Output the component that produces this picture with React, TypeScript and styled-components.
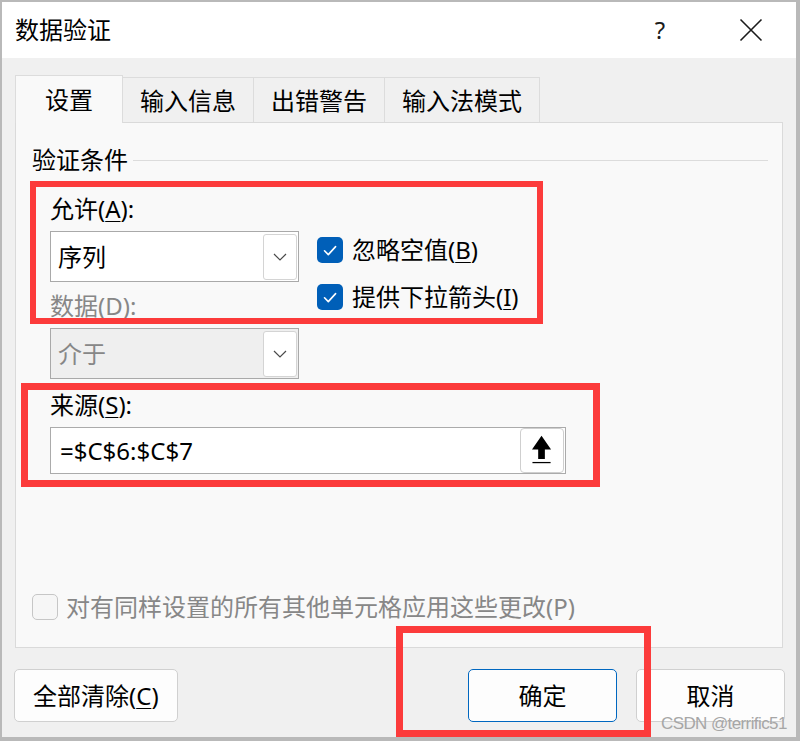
import React from "react";
import styled, { createGlobalStyle } from "styled-components";

const Global = createGlobalStyle`
  html, body { margin: 0; padding: 0; background: #b9b9b9; }
  body { font-family: "Noto Sans", "Noto Sans CJK SC", sans-serif; }
  * { box-sizing: border-box; }
`;

const Dialog = styled.div`
  position: relative;
  width: 794px;
  height: 735px;
  margin: 2px 0 0 2px;
  background: #f0f0f0;
  display: flex;
  flex-direction: column;
  font-size: 24px;
  color: #000;
  overflow: hidden;
`;

const TitleBar = styled.div`
  height: 56px;
  background: #fff;
  display: flex;
  align-items: center;
  padding: 0 10px 0 13px;
`;

const Title = styled.div`
  flex: 1;
  line-height: 28px;
`;

const TitleButton = styled.div<{ $gap?: number }>`
  width: 70px;
  height: 56px;
  display: flex;
  align-items: center;
  justify-content: center;
  margin-right: ${(p) => p.$gap ?? 0}px;
  color: #1b1b1b;
  line-height: 28px;
`;

const Body = styled.div`
  flex: 1;
  display: flex;
  flex-direction: column;
  padding: 17px 13px 0 13px;
`;

const TabRow = styled.div`
  display: flex;
  align-items: flex-end;
  position: relative;
  z-index: 1;
`;

const Tab = styled.div<{ $active?: boolean; $first?: boolean }>`
  min-width: 108px;
  padding: 0 17px;
  height: ${(p) => (p.$active ? 48 : 45)}px;
  margin-bottom: ${(p) => (p.$active ? -1 : 0)}px;
  display: flex;
  align-items: center;
  justify-content: center;
  padding-top: ${(p) => (p.$active ? 0 : 2)}px;
  background: ${(p) => (p.$active ? "#f9f9f9" : "#f0f0f0")};
  border-top: 1px solid #dcdcdc;
  border-right: 1px solid #dcdcdc;
  border-left: ${(p) => (p.$first ? "1px solid #dcdcdc" : "none")};
  line-height: 28px;
`;

const Panel = styled.div`
  height: 526px;
  border: 1px solid #dadada;
  background: #f9f9f9;
  display: flex;
  flex-direction: column;
  padding: 23px 14px 27px 16px;
`;

const SectionHeader = styled.div`
  display: flex;
  align-items: center;
  gap: 5px;
  line-height: 28px;
`;

const Rule = styled.div`
  flex: 1;
  height: 1px;
  background: #dcdcdc;
`;

const Form = styled.div`
  margin: 21px 0 0 18px;
  display: flex;
  flex-direction: column;
  gap: 12px;
`;

const Row = styled.div`
  display: flex;
  align-items: flex-start;
  gap: 18px;
`;

const LeftCol = styled.div`
  width: 249px;
  display: flex;
  flex-direction: column;
  gap: 10px;
`;

const Field = styled.div`
  display: flex;
  flex-direction: column;
  gap: 8px;
`;

const Label = styled.div<{ $disabled?: boolean }>`
  height: 28px;
  line-height: 28px;
  color: ${(p) => (p.$disabled ? "#878787" : "#000")};
  white-space: nowrap;
  u { text-underline-offset: 3px; text-decoration-thickness: 1px; }
`;

const Combo = styled.div<{ $disabled?: boolean }>`
  height: 51px;
  display: flex;
  align-items: center;
  justify-content: space-between;
  border: 1px solid #a9a9a9;
  background: ${(p) => (p.$disabled ? "#efefef" : "#fff")};
  color: ${(p) => (p.$disabled ? "#878787" : "#000")};
  padding: 0 1px 0 7px;
  line-height: 28px;
`;

const ComboButton = styled.div`
  width: 34px;
  height: 46px;
  border: 1px solid #d4d4d4;
  border-radius: 3px;
  background: #fff;
  display: flex;
  align-items: center;
  justify-content: center;
`;

const RightCol = styled.div`
  padding-top: 42px;
  display: flex;
  flex-direction: column;
  gap: 21px;
`;

const CheckRow = styled.div<{ $disabled?: boolean }>`
  height: 26px;
  display: flex;
  align-items: center;
  gap: 9px;
  line-height: 28px;
  white-space: nowrap;
  color: ${(p) => (p.$disabled ? "#878787" : "#000")};
  u { text-underline-offset: 3px; text-decoration-thickness: 1px; }
`;

const CheckText = styled.span`
  display: inline-block;
`;

const CheckBox = styled.div<{ $checked?: boolean }>`
  width: 26px;
  height: 26px;
  flex: none;
  border-radius: 5px;
  background: ${(p) => (p.$checked ? "#005fb8" : "#f6f6f6")};
  border: ${(p) => (p.$checked ? "none" : "1.5px solid #c6c6c6")};
  display: flex;
  align-items: center;
  justify-content: center;
`;

const SourceInput = styled.div`
  width: 516px;
  height: 47px;
  border: 1px solid #ababab;
  background: #fff;
  display: flex;
  align-items: center;
  justify-content: space-between;
  padding: 0 1px 0 9px;
  line-height: 28px;
`;

const UploadButton = styled.div`
  width: 44px;
  height: 45px;
  border: 1px solid #cfcfcf;
  border-radius: 4px;
  background: #fff;
  display: flex;
  align-items: center;
  justify-content: center;
`;

const BottomCheck = styled(CheckRow)`
  margin-top: auto;
  gap: 8px;
`;

const ButtonRow = styled.div`
  margin: 21px -2px 0 -1px;
  display: flex;
  gap: 19px;
`;

const Button = styled.div<{ $primary?: boolean; $push?: boolean }>`
  min-width: 149px;
  height: 53px;
  padding: 0 18px;
  display: flex;
  align-items: center;
  justify-content: center;
  background: #fdfdfd;
  border: 1px solid ${(p) => (p.$primary ? "#0067c0" : "#d0d0d0")};
  border-radius: 5px;
  margin-left: ${(p) => (p.$push ? "auto" : "0")};
  line-height: 28px;
  white-space: nowrap;
  u { text-underline-offset: 3px; text-decoration-thickness: 1px; }
`;

const RedBox = styled.div<{ $x: number; $y: number; $w: number; $h: number; $t: number }>`
  position: absolute;
  left: ${(p) => p.$x}px;
  top: ${(p) => p.$y}px;
  width: ${(p) => p.$w}px;
  height: ${(p) => p.$h}px;
  border: ${(p) => p.$t}px solid #fc3b3b;
  pointer-events: none;
  z-index: 5;
`;

const Watermark = styled.div`
  position: absolute;
  left: 659px;
  top: 712px;
  font-family: "Liberation Sans", Arial, sans-serif;
  font-size: 17px;
  line-height: 19px;
  letter-spacing: -0.6px;
  color: #a6a6a6;
  z-index: 6;
  white-space: nowrap;
`;

const Chevron = () => (
  <svg width="14" height="8" viewBox="0 0 14 8">
    <path d="M1 1 L7 7 L13 1" fill="none" stroke="#4a4a4a" strokeWidth="1.2" />
  </svg>
);

const Check = () => (
  <svg width="26" height="26" viewBox="0 0 26 26">
    <path d="M7.5 13.8 L11.3 17.6 L18.6 9.6" fill="none" stroke="#fff" strokeWidth="1.6" strokeLinecap="round" strokeLinejoin="round" />
  </svg>
);

const UpArrow = () => (
  <svg width="44" height="45" viewBox="0 0 44 45">
    <polygon points="21.5,7 31.5,21.5 25,21.5 25,31.5 18,31.5 18,21.5 11.5,21.5" fill="#000" />
    <rect x="12" y="34.5" width="19" height="1.3" fill="#000" />
  </svg>
);

const CloseIcon = () => (
  <svg width="24" height="24" viewBox="0 0 24 24">
    <path d="M1.5 1.5 L22.5 22.5 M22.5 1.5 L1.5 22.5" stroke="#1b1b1b" strokeWidth="1.6" />
  </svg>
);

export default function App() {
  return (
    <>
      <Global />
      <Dialog>
        <TitleBar>
          <Title>数据验证</Title>
          <TitleButton $gap={21}>?</TitleButton>
          <TitleButton>
            <CloseIcon />
          </TitleButton>
        </TitleBar>
        <Body>
          <TabRow>
            <Tab $active $first>设置</Tab>
            <Tab>输入信息</Tab>
            <Tab>出错警告</Tab>
            <Tab>输入法模式</Tab>
          </TabRow>
          <Panel>
            <SectionHeader>
              验证条件
              <Rule />
            </SectionHeader>
            <Form>
              <Row>
                <LeftCol>
                  <Field>
                    <Label>
                      允许(<u>A</u>):
                    </Label>
                    <Combo>
                      序列
                      <ComboButton>
                        <Chevron />
                      </ComboButton>
                    </Combo>
                  </Field>
                  <Field>
                    <Label $disabled>数据(D):</Label>
                    <Combo $disabled>
                      介于
                      <ComboButton>
                        <Chevron />
                      </ComboButton>
                    </Combo>
                  </Field>
                </LeftCol>
                <RightCol>
                  <CheckRow>
                    <CheckBox $checked>
                      <Check />
                    </CheckBox>
                    <CheckText>
                      忽略空值(<u>B</u>)
                    </CheckText>
                  </CheckRow>
                  <CheckRow>
                    <CheckBox $checked>
                      <Check />
                    </CheckBox>
                    <CheckText>
                      提供下拉箭头(<u>I</u>)
                    </CheckText>
                  </CheckRow>
                </RightCol>
              </Row>
              <Field>
                <Label>
                  来源(<u>S</u>):
                </Label>
                <SourceInput>
                  <span>=$C$6:$C$7</span>
                  <UploadButton>
                    <UpArrow />
                  </UploadButton>
                </SourceInput>
              </Field>
            </Form>
            <BottomCheck $disabled>
              <CheckBox />
              <CheckText>对有同样设置的所有其他单元格应用这些更改(P)</CheckText>
            </BottomCheck>
          </Panel>
          <ButtonRow>
            <Button>
              <span>
                全部清除(<u>C</u>)
              </span>
            </Button>
            <Button $primary $push>
              确定
            </Button>
            <Button>取消</Button>
          </ButtonRow>
        </Body>
        <RedBox $x={28} $y={179} $w={513} $h={143} $t={6} />
        <RedBox $x={19} $y={381} $w={579} $h={104} $t={7} />
        <RedBox $x={394} $y={624} $w={255} $h={111} $t={7} />
        <Watermark>CSDN @terrific51</Watermark>
      </Dialog>
    </>
  );
}
